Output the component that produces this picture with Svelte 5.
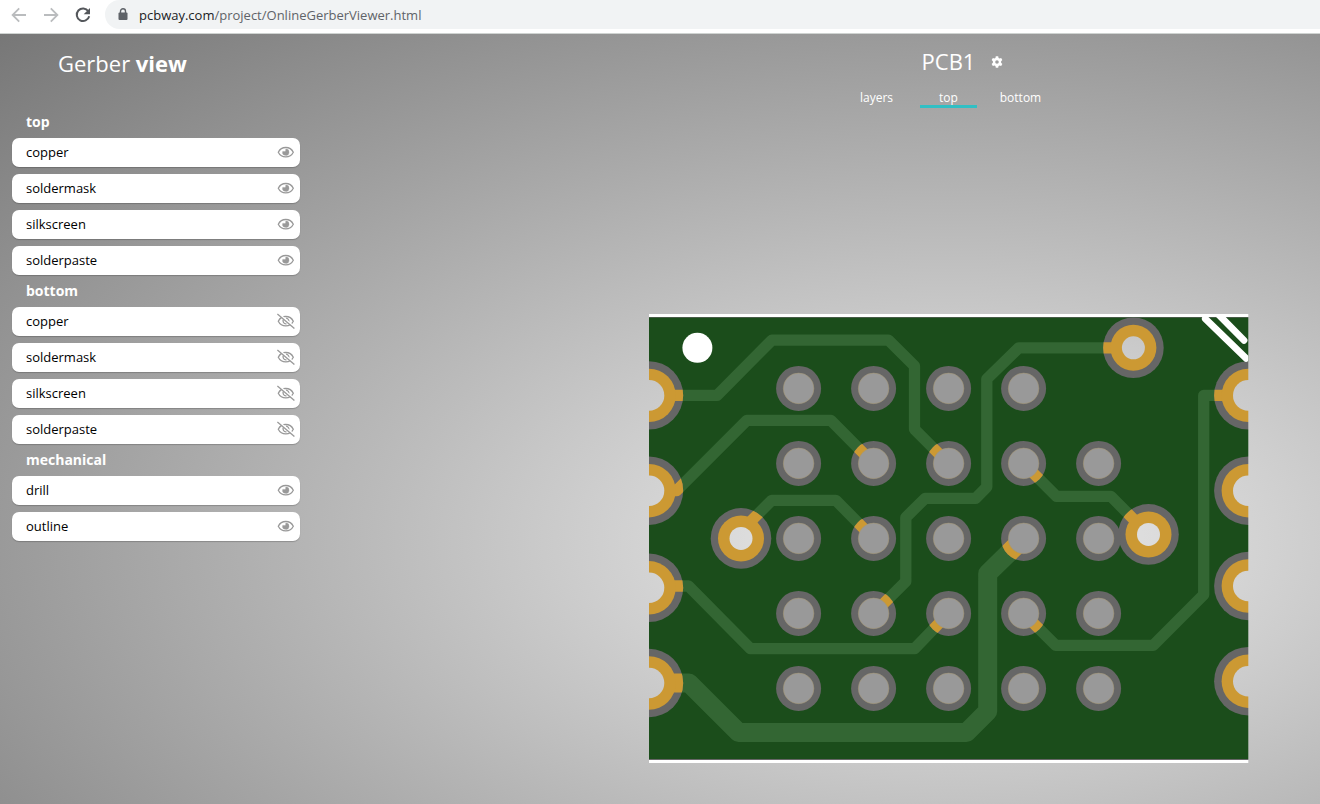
<script>
  let activeTab = $state('top');
  const tabs = ['layers', 'top', 'bottom'];

  let groups = $state([
    {
      name: 'top',
      layers: [
        { name: 'copper', visible: true },
        { name: 'soldermask', visible: true },
        { name: 'silkscreen', visible: true },
        { name: 'solderpaste', visible: true }
      ]
    },
    {
      name: 'bottom',
      layers: [
        { name: 'copper', visible: false },
        { name: 'soldermask', visible: false },
        { name: 'silkscreen', visible: false },
        { name: 'solderpaste', visible: false }
      ]
    },
    {
      name: 'mechanical',
      layers: [
        { name: 'drill', visible: true },
        { name: 'outline', visible: true }
      ]
    }
  ]);

  // Board drawing units: one unit is one CSS pixel at the default zoom.
  const columns = [798.6, 873.6, 948.6, 1023.6, 1098.6];
  const rows = [388.4, 463.4, 538.4, 613.4, 688.4];
  const pins = rows
    .flatMap((y) => columns.map((x) => ({ x, y })))
    .filter((p) => !(p.x === 1098.6 && p.y === 388.4));

  const pads = [
    { x: 741, y: 538.4 },
    { x: 1133.4, y: 347.8 },
    { x: 1148.5, y: 534.4 }
  ];

  const edges = [
    { x: 649, y: 395.4 },
    { x: 649, y: 490.7 },
    { x: 649, y: 587.8 },
    { x: 649, y: 683 },
    { x: 1248.3, y: 395.4 },
    { x: 1248.3, y: 490.7 },
    { x: 1248.3, y: 586 },
    { x: 1248.3, y: 681.2 }
  ];

  const traces = [
    { w: 11.3, p: '649,395.4 717,395.4 771.8,340.2 888.6,340.2 914.5,366 914.5,429.3 948.6,463.4' },
    { w: 11.3, p: '649,490.7 676.5,490.7 746.7,420.4 831,420.4 873.6,463.4' },
    { w: 11.3, p: '741,531 771.8,500.3 835.8,500.3 873.6,538.4' },
    { w: 11.3, p: '649,586 688.5,586 750.5,648.7 914.5,648.7 948.6,613.4' },
    { w: 19, p: '649,683 689,683 738.6,732.5 966.5,732.5 987.7,711.3 987.7,573.5 1023.6,538.4' },
    { w: 11.3, p: '1133.4,347.9 1018.7,347.9 986.8,379 986.8,487 975.5,498.4 925,498.4 905.8,517.4 905.8,581.6 873.6,613.4' },
    { w: 11.3, p: '1023.6,463.4 1056.6,496.4 1111,496.4 1148.5,534.4' },
    { w: 11.3, p: '1248.3,395.4 1203.7,395.4 1203.7,594.7 1153.3,645.3 1055.6,645.3 1023.6,613.4' }
  ];
</script>

{#snippet traceLines(color)}
  {#each traces as t}
    <polyline points={t.p} stroke={color} stroke-width={t.w} fill="none" stroke-linecap="round" stroke-linejoin="round" />
  {/each}
{/snippet}

<div class="window">
  <header class="browser">
    <button class="nav" aria-label="Back">
      <svg width="16" height="16" viewBox="0 0 16 16" fill="none" stroke="#babcbe" stroke-width="1.8"><path d="M15 8H2M8.2 1.4 1.6 8l6.6 6.6" /></svg>
    </button>
    <button class="nav" aria-label="Forward">
      <svg width="16" height="16" viewBox="0 0 16 16" fill="none" stroke="#babcbe" stroke-width="1.8"><path d="M1 8h13M7.8 1.4 14.4 8l-6.6 6.6" /></svg>
    </button>
    <button class="nav" aria-label="Reload">
      <svg width="16" height="16" viewBox="0 0 16 16"><path d="M13.3 4.2A6.3 6.3 0 1 0 14.2 9.2" fill="none" stroke="#54575b" stroke-width="2" /><path d="M15 1v6.300H8.700z" fill="#54575b" /></svg>
    </button>
    <div class="address">
      <svg width="10" height="13" viewBox="0 0 10 13"><path d="M2.500 5V3.300a2.500 2.500 0 0 1 5 0V5" fill="none" stroke="#5f6368" stroke-width="1.400" /><rect x="0.500" y="4.500" width="9" height="7.500" rx="1" fill="#5f6368" /></svg>
      <div class="url" role="textbox" tabindex="0" contenteditable="true" aria-label="Address"><span>pcbway.com</span>/project/OnlineGerberViewer.html</div>
    </div>
  </header>

  <div class="page">
    <aside>
      <h1>Gerber <b>view</b></h1>
      {#each groups as group}
        <section>
          <h2>{group.name}</h2>
          <ul>
            {#each group.layers as layer}
              <li>
                <span>{layer.name}</span>
                <button
                  aria-label="Toggle {group.name} {layer.name}"
                  aria-pressed={layer.visible}
                  onclick={() => (layer.visible = !layer.visible)}
                >
                  <svg width="18" height="16" viewBox="0 0 18 16" fill="none" stroke="#999" stroke-width="1.300">
                    {#if layer.visible}
                      <path d="M1.300 8.200C3 4.800 5.800 3.500 8.800 3.500s5.800 1.300 7.500 4.700c-1.700 3.400-4.500 4.700-7.500 4.700S3 11.600 1.300 8.200z" />
                      <path d="M8.800 5a3.200 3.200 0 1 1-3.100 2.400h1.900a1.200 1.200 0 0 0 1.200-1.200z" fill="#999" stroke-width="0.400" />
                    {:else}
                      <path d="M1.300 8.200C3 4.800 5.800 3.500 8.800 3.500s5.800 1.300 7.500 4.700c-1.700 3.400-4.500 4.700-7.500 4.700S3 11.600 1.300 8.200z" />
                      <path d="M6.600 6.200a3 3 0 0 0 2.900 4.700M9 5.200a3 3 0 0 1 2.800 3.600" />
                      <path d="M1.200 0.300 18 14.500" stroke="#fff" stroke-width="1.800" />
                      <path d="M0.400 1.100 17.400 15.400" stroke-width="1.300" />
                    {/if}
                  </svg>
                </button>
              </li>
            {/each}
          </ul>
        </section>
      {/each}
    </aside>

    <main>
      <div class="title">
        <h2>PCB1</h2>
        <button aria-label="Settings">
          <svg width="12" height="12" viewBox="0 0 12 12" fill="#fff">
            <path fill-rule="evenodd" d="M4.800 0.300h2.400l.35 1.650 1 .55 1.600-.55 1.200 2.050-1.250 1.150v1.700l1.250 1.150-1.200 2.050-1.600-.55-1 .55-.35 1.650H4.800l-.35-1.650-1-.55-1.600.55L.65 8l1.250-1.150v-1.700L.65 4l1.200-2.050 1.600.55 1-.55zM6 4.200a1.800 1.800 0 1 0 0 3.600 1.800 1.800 0 0 0 0-3.600z" />
          </svg>
        </button>
      </div>
      <nav>
        {#each tabs as tab}
          <button class:active={activeTab === tab} onclick={() => (activeTab = tab)}>{tab}</button>
        {/each}
      </nav>

      <svg class="board" viewBox="648 314 601 449" role="img" aria-label="Top side of PCB1">
        <defs>
          <clipPath id="maskOpenings">
            {#each pins as p}<circle cx={p.x} cy={p.y} r="22.500" />{/each}
            {#each pads as p}<circle cx={p.x} cy={p.y} r="30.300" />{/each}
            {#each edges as p}<circle cx={p.x} cy={p.y} r="34.200" />{/each}
          </clipPath>
          <clipPath id="outline"><rect x="649" y="314" width="599.300" height="449" /></clipPath>
          <mask id="drills" maskUnits="userSpaceOnUse" x="648" y="314" width="601" height="449">
            <rect x="648" y="314" width="601" height="449" fill="#fff" />
            {#each pads as p}<circle cx={p.x} cy={p.y} r="11.500" />{/each}
            {#each edges as p}<circle cx={p.x} cy={p.y} r="15.300" />{/each}
          </mask>
        </defs>
        <g clip-path="url(#outline)">
          <g mask="url(#drills)">
            <rect x="648" y="317" width="601" height="443" fill="#666" />
            <rect x="648" y="317.600" width="601" height="441.400" fill="#1b4d1b" />
            {@render traceLines('#336633')}
            {#each edges as p}<circle cx={p.x} cy={p.y} r="34.200" fill="#666" />{/each}
            {#each pads as p}<circle cx={p.x} cy={p.y} r="30.300" fill="#666" />{/each}
            {#each pins as p}<circle cx={p.x} cy={p.y} r="22.500" fill="#666" />{/each}
            <g clip-path="url(#maskOpenings)">{@render traceLines('#cc9933')}</g>
            {#each edges as p}<circle cx={p.x} cy={p.y} r="26.700" fill="#cc9933" />{/each}
            {#each pads as p}<circle cx={p.x} cy={p.y} r="23" fill="#cc9933" />{/each}
            {#each pins as p}<circle cx={p.x} cy={p.y} r="15.300" fill="#999" stroke="#a7966f" stroke-width="0.500" />{/each}
          </g>
          <g stroke="#fff" fill="none" stroke-width="6.800" stroke-linecap="round">
            <path d="M1205.300 318.700 1246 358.300" />
            <path d="M1218.500 314.500 1244 340.300" />
          </g>
          <circle cx="697.400" cy="347.800" r="15" fill="#fff" />
          <rect x="649" y="314" width="600" height="3" fill="#fff" />
          <rect x="649" y="760" width="600" height="3" fill="#fff" />
        </g>
      </svg>
    </main>
  </div>
</div>

<style>
  :global(body) {
    margin: 0;
    font-family: 'Open Sans', sans-serif;
  }
  .window {
    display: flex;
    flex-direction: column;
    min-height: 100vh;
  }
  button {
    display: flex;
    align-items: center;
    justify-content: center;
    padding: 0;
    border: 0;
    background: none;
    color: inherit;
    font: inherit;
    cursor: pointer;
  }
  h1,
  h2,
  ul {
    margin: 0;
    padding: 0;
    font-weight: 400;
  }
  .browser {
    display: flex;
    align-items: flex-start;
    height: 33px;
    border-bottom: 1px solid #cfd3d1;
    background: #fff;
    padding-left: 11px;
  }
  .nav {
    width: 16px;
    height: 30px;
    margin-right: 16px;
  }
  .address {
    flex: 1;
    display: flex;
    align-items: center;
    gap: 11px;
    height: 29px;
    margin-left: -2px;
    padding-left: 13px;
    border-radius: 15px 0 0 15px;
    background: #f1f3f4;
  }
  .url {
    flex: 1;
    color: #5f6368;
    font-size: 13px;
    line-height: 20px;
    outline: none;
  }
  .url span {
    color: #202124;
  }
  .page {
    flex: 1;
    display: grid;
    grid-template-columns: 312px 1fr;
    background: radial-gradient(ellipse farthest-corner at 72% 66%, #eee, #777);
  }
  aside {
    padding: 0 12px;
  }
  h1 {
    margin: 0 0 14px;
    padding-left: 46px;
    color: #fff;
    font-size: 22px;
    line-height: 58px;
  }
  section h2 {
    padding-left: 14px;
    color: #fff;
    font-size: 14px;
    font-weight: 700;
    line-height: 32px;
  }
  ul {
    display: flex;
    flex-direction: column;
    gap: 7px;
    list-style: none;
  }
  li {
    display: flex;
    align-items: center;
    justify-content: space-between;
    height: 27px;
    padding: 0 5px 2px 14px;
    border-radius: 7px;
    background: #fff;
    box-shadow: 0 1px 1px rgba(0, 0, 0, 0.2);
    color: #000;
    font-size: 13px;
  }
  main {
    display: flex;
    flex-direction: column;
    align-items: center;
    padding: 7px 0 40px 265px;
    color: #fff;
  }
  .title {
    display: flex;
    align-items: center;
    gap: 16px;
    padding-left: 28px;
  }
  .title h2 {
    font-size: 22px;
    line-height: 40px;
  }
  .title button {
    padding-top: 2px;
  }
  nav {
    display: flex;
    gap: 15px;
    margin-top: 9px;
  }
  nav button {
    width: 57px;
    height: 18px;
    border-bottom: 3px solid transparent;
    font-size: 12px;
    line-height: 15px;
  }
  nav .active {
    border-color: #31bfc4;
  }
  .board {
    width: 100%;
    max-width: 601px;
    margin-top: 206px;
  }
</style>
